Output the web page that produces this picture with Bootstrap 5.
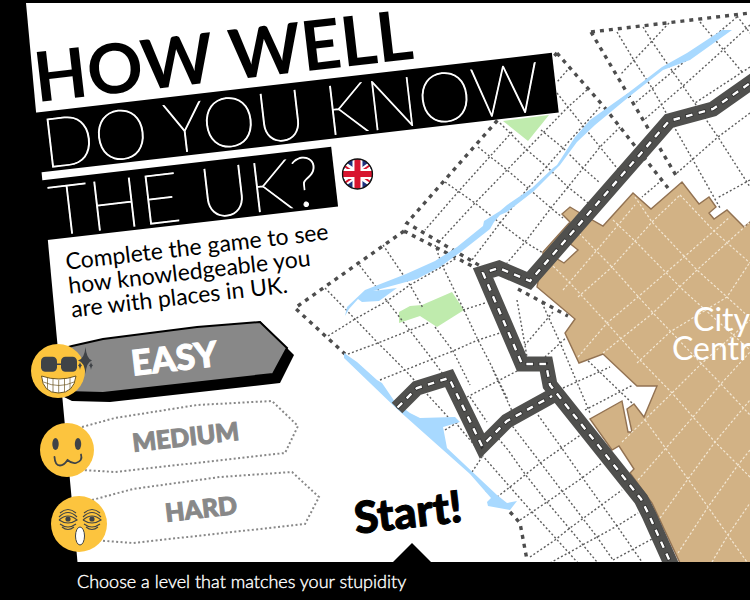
<!DOCTYPE html>
<html lang="en">
<head>
<meta charset="utf-8">
<meta name="viewport" content="width=device-width, initial-scale=1">
<title>How well do you know the UK?</title>
<link rel="stylesheet" href="https://cdn.jsdelivr.net/npm/bootstrap@5.3.0/dist/css/bootstrap.min.css">
<style>
  body { font-family: Lato, "Open Sans", sans-serif; background: #000; color: #000; }
  .city-map { position: absolute; inset: 0; z-index: 0; }
  .stage { padding: 41px 0 0 28px; z-index: 1; }
  .tilted { transform: rotate(-6.6deg); transform-origin: 0 0; }
  .headline { font-size: 69px; line-height: 60px; font-weight: 200; }
  .headline-bold { line-height: 72px; font-weight: 700; padding-left: 2px; }
  .headline-bar { background: #000; color: #fff; padding: 0 16px 0 10px; margin-left: -8px; height: 60px; -webkit-text-stroke: 1px #fff; }
  .headline-row { gap: 7px; margin-top: 8px; }
  .flag { transform: rotate(6.6deg); }
  .intro { font-size: 23px; line-height: 24px; margin: 8px 0 0 36px; width: 280px; }
  .level { position: relative; width: 272px; height: 72px; border: 0; background: none; padding: 0 0 0 20px; color: #888; font-size: 25px; font-weight: 900; }
  .level svg { position: absolute; left: 0; top: 0; overflow: visible; }
  .level span { position: relative; display: inline-block; transform: rotate(-6.6deg); -webkit-text-stroke: 1px currentColor; }
  .level-easy { height: 80px; margin-left: 2px; padding: 0 0 8px 16px; color: #fff; font-size: 35px; }
  .level-medium { margin-left: 12px; }
  .level-hard { margin-left: 23px; padding-left: 28px; }
  .hint { font-size: 18px; line-height: 38px; padding-left: 77px; font-weight: 300; -webkit-text-stroke: .4px #fff; }
  .edge { stroke: #4d4d4d; stroke-width: 3.4; stroke-dasharray: 4 5; fill: none; }
  .lane { stroke: #5c5c5c; stroke-width: 1.4; stroke-dasharray: 2 2.2; fill: none; }
  .alley { stroke: #f3e7d3; stroke-width: 1.2; stroke-dasharray: 2.4 2; fill: none; }
  .water { fill: #a8d9ff; }
  .park { fill: #bfebad; }
  .road { stroke: #50504e; stroke-width: 15; fill: none; stroke-miterlimit: 8; }
  .road-line { stroke: #2f2f2f; stroke-width: 4; stroke-dasharray: 8 5; fill: none; }
  .road-paint { stroke: #fff; stroke-width: 2.4; stroke-dasharray: 6.6 6.4; stroke-dashoffset: -.7; fill: none; }
</style>
<script src="https://cdn.jsdelivr.net/npm/bootstrap@5.3.0/dist/js/bootstrap.bundle.min.js"></script>
</head>
<body class="d-flex flex-column min-vh-100 overflow-hidden">
<main class="flex-grow-1 position-relative overflow-hidden">
  <svg class="city-map w-100 h-100" viewBox="0 0 750 562" preserveAspectRatio="xMinYMin slice" role="img" aria-label="Street map around the city centre">
    <path fill="#fff" d="M26 3H750V562H77.500Z"/>
    <g class="park"><path d="M399 312 410 306 422 305 452 292 464 310 437 327 420 316 399 323Z"/><path d="M503 121 528 141 549 115Z"/></g>
    <path class="lane" d="M617 32 635 62 652 88 677 132 693 160 720 208M643 27 653 43 673 72 683 86 718 137 750 187M700 22 743 73M737 16 750 33M669 23 620 75M750 25 723 50 683 86 645 119M737 17 672 72 635 103M750 67 695 103M750 113 718 137 677 173M750 180 717 198M662 180 642 197"/>
    <path class="lane" d="M570 67 557 82M587 90 568 107 507 170 475 203 439 242M512 132 458 192 425 230M600 107 563 148 528 188 500 223 472 260M620 127 600 147 568 187 551 208 525 242 507 263M557 93 568 107 600 147 625 178M500 123 527 150 547 167 568 187 588 203M541 130 563 148 583 168 600 183M478 147 507 170 528 188 551 208 563 218M445 182 475 203 500 223 525 242 543 253"/>
    <path class="lane" d="M325 288 355 319 378 343 405 370 448 417M357 262 387 301 432 359 445 377M383 245 410 285 423 308M435 327 453 351 470 385M470 397 487 422M493 370 513 413M435 245 442 265 463 308 478 340 490 363 508 400M328 336 355 319 387 301 410 285 457 258M348 354 378 343 428 323M463 310 485 303M380 380 405 370 453 351 478 340 500 333M467 397 517 371"/>
    <path class="lane" d="M517 300 527 357M542 303 562 347 590 413M553 312 525 345M568 336 545 357M563 388 610 367M582 355 632 403M585 410 633 385"/>
    <path class="lane" d="M472 472 482 457M445 430 458 422M497 497 510 487 540 463 582 434M520 520 547 502 582 478 602 463M530 557 555 540 570 528 622 490M550 563 597 537 617 526 638 513M613 560 652 539M482 455 510 487 532 512 578 563M493 432 508 450 525 474 547 502 569 528 597 562M510 423 540 462 565 495 597 537 613 560M538 415 561 447 582 477 617 526 642 562M455 422 480 452"/>
    <path class="edge" d="M591 32 750 13M591 32 617 76 677 177M557 53 605 108 668 188M557 53 496 122 407 223 482 267M404 231 474 267M404 231 295 308 345 354M518 289 568 316M486 488 488 492M510 512 520 523 527 560"/>
    <path class="water" d="M732 30 722 30 687 53 662 67 628 93 590 120 575 137 557 165 553 168 532 188 507 205 500 211 484 221 483 226 457 247 435 261 406 274 365 290 347 307 345 316 349 309 358 299 362 302 379 301 397 288 373 291 417 279 440 267 462 251 490 229 494 222 500 215 507 212 534 191 556 169 560 165 577 142 595 125 630 96 663 70 690 60Z"/>
    <path class="water" d="M344 353 357 362 377 380 382 383 395 402 410 413 420 418 455 417 460 422 443 427 447 448 497 495 507 503 517 501 510 510 488 506 487 502 491 498 470 474 397 409 344 358Z"/>
    <path fill="#d2b285" stroke="#927252" stroke-width="1.4" d="M537 287 575 319 565 333 579 363 603 354 637 386 657 386 644 417 634 404 627 409 632 432 628 432 622 401 590 419 612 450 619 446 634 469 630 473 652 503 680 563 755 563 755 218 750 222 744 227 727 210 714 219 709 213 716 207 709 197 699 204 682 182 651 209 633 193 603 226 580 213 570 207 562 214 570 222 543 252 543 256Z"/>
    <path fill="#fff" stroke="#927252" stroke-width="1.4" d="M568 242 578 250 564 263 554 257Z"/>
    <path class="alley" d="M547 260 570 283 607 323 640 360 672 393 693 417 715 442 738 465 750 477M573 227 610 265 653 313 720 383 750 415M613 220 637 243 683 290 750 350M635 197 652 222 697 270 727 297 750 318M680 195 715 232 750 263M563 290 597 250 635 205M578 297 612 267 652 222 680 195M578 357 607 323 638 297 730 217M603 353 653 313 697 270 750 222M637 363 670 332 727 297 750 262M622 442 672 393 700 365 750 320M638 480 666 448 693 417 720 385 750 352M660 518 688 479 715 442 750 400M678 553 708 507 738 465 750 450M712 562 728 535 750 503M645 420 688 479 708 507 747 562"/>
    <path class="road" d="M760 76 713 109 669 121 529 281 499 268 483 273 522 364 546 364 550 385 641 499 649 515 672 566"/>
    <path class="road" d="M397 408 417 388 449 378 482 446 507 421 552 396"/>
    <path class="road-line" d="M760 76 713 109 669 121 530 281 499 268 483 273 522 364 546 364 550 385 641 499 649 515 672 566M397 408 417 388 449 378 482 446 507 421 552 396"/>
    <path class="road-paint" d="M760 76 713 109 669 121 530 281 499 268 483 273 522 364 546 364 550 385 641 499 649 515 672 566M397 408 417 388 449 378 482 446 507 421 552 396"/>
    <g fill="#fff" font-size="32"><text x="693" y="331">City</text><text x="672" y="360">Centre</text></g>
    <text transform="translate(356 534) rotate(-6.600)" font-size="44" font-weight="900" stroke="#000" stroke-width="1">Start!</text>
    <path d="M393 562 412 543 431 562Z"/>
  </svg>

  <div class="stage position-relative">
    <h1 class="headline tilted m-0 text-nowrap">
      <span class="headline-bold d-block">HOW WELL</span>
      <span class="headline-bar d-table">DO YOU KNOW</span>
      <span class="headline-row d-flex align-items-center">
        <span class="headline-bar">THE UK?</span>
        <svg class="flag" width="32" height="32" viewBox="0 0 32 32" role="img" aria-label="Union flag">
          <clipPath id="disc"><circle cx="16" cy="16" r="15"/></clipPath>
          <g clip-path="url(#disc)">
            <path fill="#20317f" d="M0 0H32V32H0Z"/>
            <path stroke="#fff" stroke-width="6" d="M-4 2 36 30M36 2-4 30"/>
            <path stroke="#d8152f" stroke-width="2" d="M-4 3 16 17M36 2 16 16M36 29 16 15M-4 30 16 16"/>
            <path stroke="#fff" stroke-width="10" d="M16 0V32M0 16H32"/>
            <path stroke="#d8152f" stroke-width="6" d="M16 0V32M0 16H32"/>
          </g>
          <circle cx="16" cy="16" r="15" fill="none" stroke="#111" stroke-width="1.400"/>
        </svg>
      </span>
    </h1>
    <p class="intro tilted">Complete the game to see<br>how knowledgeable you<br>are with places in UK.</p>

    <div class="d-flex flex-column align-items-start">
      <button type="button" class="level level-easy">
        <svg width="272" height="80" viewBox="30 320 272 80" aria-hidden="true">
          <path d="M60 394 72 400 110 401 280 382 294 354 287 347 260 320Z"/>
          <path fill="#888" stroke="#000" stroke-width="2" d="M65 347 72 345 103 338 197 326 260 321 287 347 273 373 103 392 65 391Z"/>
          <g transform="translate(31 343)">
            <circle cx="27" cy="27" r="27" fill="#fcc43e"/>
            <g fill="#3f4347"><rect x="10" y="12.700" width="16" height="15" rx="4.500"/><rect x="30" y="12.700" width="16" height="15" rx="4.500"/><path d="M25 19.500H31V21H25Z"/></g>
            <path fill="#fff" stroke="#6b5520" stroke-width="1" d="M10.500 32Q28 38 45 32Q43 49 27.500 49T10.500 32Z"/>
            <path fill="none" stroke="#6b5520" stroke-width=".7" d="M12.500 38Q28 45 43 38M16.500 34V45M22 35V48M27.700 36V49M33.500 35V48M39 34V45"/>
            <path fill="#3f4347" d="M54.500 3Q55.500 15 61 16.500Q55.500 18 54.500 30Q53.500 18 47 16.500Q53.500 15 54.500 3ZM49 18Q49.500 21 51 21.500Q49.500 22 49 26Q48.500 22 47 21.500Q48.500 21 49 18ZM60 18Q60.500 21 62 21.500Q60.500 22 60 26Q59.500 22 58 21.500Q59.500 21 60 18Z"/>
          </g>
        </svg>
        <span>EASY</span>
      </button>
      <button type="button" class="level level-medium">
        <svg width="272" height="72" viewBox="40 400 272 72" aria-hidden="true">
          <path fill="none" stroke="#888" stroke-width="2" stroke-dasharray="2 2.400" d="M82 426 115 417 197 404 272 400 298 425 285 452 115 471 82 469"/>
          <g transform="translate(40 422)">
            <circle cx="27" cy="27" r="27" fill="#fcc43e"/>
            <g fill="#3f4347"><ellipse cx="15.500" cy="21" rx="3.200" ry="6"/><ellipse cx="38" cy="21" rx="3.200" ry="6"/></g>
            <path fill="none" stroke="#3f4347" stroke-width="1.800" stroke-linecap="round" d="M14.500 34Q15 42.500 20 42.500Q24 42.500 27.500 37Q32 41 36 40Q43 38 41 31.500"/>
          </g>
        </svg>
        <span>MEDIUM</span>
      </button>
      <button type="button" class="level level-hard">
        <svg width="272" height="72" viewBox="51 472 272 72" aria-hidden="true">
          <path fill="none" stroke="#888" stroke-width="2" stroke-dasharray="2 2.400" d="M92 499 133 488 220 476 292 471 319 496 305 523 133 542 92 539"/>
          <g transform="translate(51 495)">
            <circle cx="28" cy="28" r="28" fill="#fcc43e"/>
            <g fill="none" stroke="#3f4347" stroke-width="1.100">
              <path d="M9 17Q17 10 25 17M8 21Q17 12 26 21M8 24Q17 16 26 24Q17 30 8 24M9 28Q17 34 25 28M11 31Q17 36 23 31"/>
              <path d="M33 17Q41 10 49 17M32 21Q41 12 50 21M32 24Q41 16 50 24Q41 30 32 24M33 28Q41 34 49 28M35 31Q41 36 47 31"/>
            </g>
            <g fill="#3f4347"><circle cx="17" cy="23" r="2.600"/><circle cx="41" cy="23" r="2.600"/></g>
            <ellipse cx="29" cy="40" rx="4.500" ry="9" fill="#fff" stroke="#3f4347"/>
          </g>
        </svg>
        <span>HARD</span>
      </button>
    </div>
  </div>
</main>
<footer class="hint bg-black text-white">Choose a level that matches your stupidity</footer>
</body>
</html>
